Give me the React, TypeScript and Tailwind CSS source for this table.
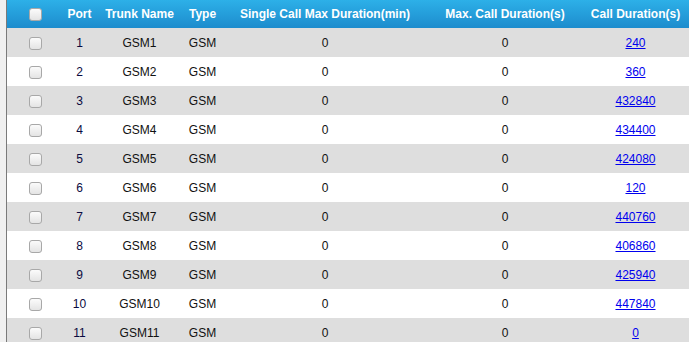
const rows = [
  { port: 1, dur: '240' },
  { port: 2, dur: '360' },
  { port: 3, dur: '432840' },
  { port: 4, dur: '434400' },
  { port: 5, dur: '424080' },
  { port: 6, dur: '120' },
  { port: 7, dur: '440760' },
  { port: 8, dur: '406860' },
  { port: 9, dur: '425940' },
  { port: 10, dur: '447840' },
  { port: 11, dur: '0' },
]

function Box() {
  return (
    <span className="inline-block w-[13px] h-[13px] rounded-[3px] border border-[#a8a8a8] bg-gradient-to-b from-[#fbfbfb] to-[#e4e4e4] align-middle" />
  )
}

export default function App() {
  return (
    <div className="w-[689px] h-[342px] overflow-hidden bg-[#f0f0f0] pl-[6px] font-['Liberation_Sans',Arial,sans-serif] text-[12px]">
      <div className="border-l border-[#7a7a7a] h-full bg-white">
        <table className="table-fixed border-collapse w-[682px]">
          <colgroup>
            <col className="w-[56px]" />
            <col className="w-[33px]" />
            <col className="w-[87px]" />
            <col className="w-[39px]" />
            <col className="w-[206px]" />
            <col className="w-[154px]" />
            <col className="w-[107px]" />
          </colgroup>
          <thead>
            <tr className="h-[28px] bg-gradient-to-b from-[#2db0e8] to-[#1d8ccd] text-white font-bold">
              <th className="text-center font-bold"><Box /></th>
              <th className="text-center font-bold">Port</th>
              <th className="text-center font-bold">Trunk Name</th>
              <th className="text-center font-bold">Type</th>
              <th className="text-center font-bold">Single Call Max Duration(min)</th>
              <th className="text-center font-bold">Max. Call Duration(s)</th>
              <th className="text-center font-bold">Call Duration(s)</th>
            </tr>
          </thead>
          <tbody className="text-[#111]">
            {rows.map((r, i) => (
              <tr key={r.port} className={`h-[29px] ${i % 2 === 0 ? 'bg-[#dedede]' : 'bg-white'}`}>
                <td className="text-center"><Box /></td>
                <td className="text-center text-[#0a0a40]">{r.port}</td>
                <td className="text-center">GSM{r.port}</td>
                <td className="text-center">GSM</td>
                <td className="text-center">0</td>
                <td className="text-center">0</td>
                <td className="text-center">
                  <a href="#" className="text-[#0000ee] underline">{r.dur}</a>
                </td>
              </tr>
            ))}
          </tbody>
        </table>
      </div>
    </div>
  )
}
